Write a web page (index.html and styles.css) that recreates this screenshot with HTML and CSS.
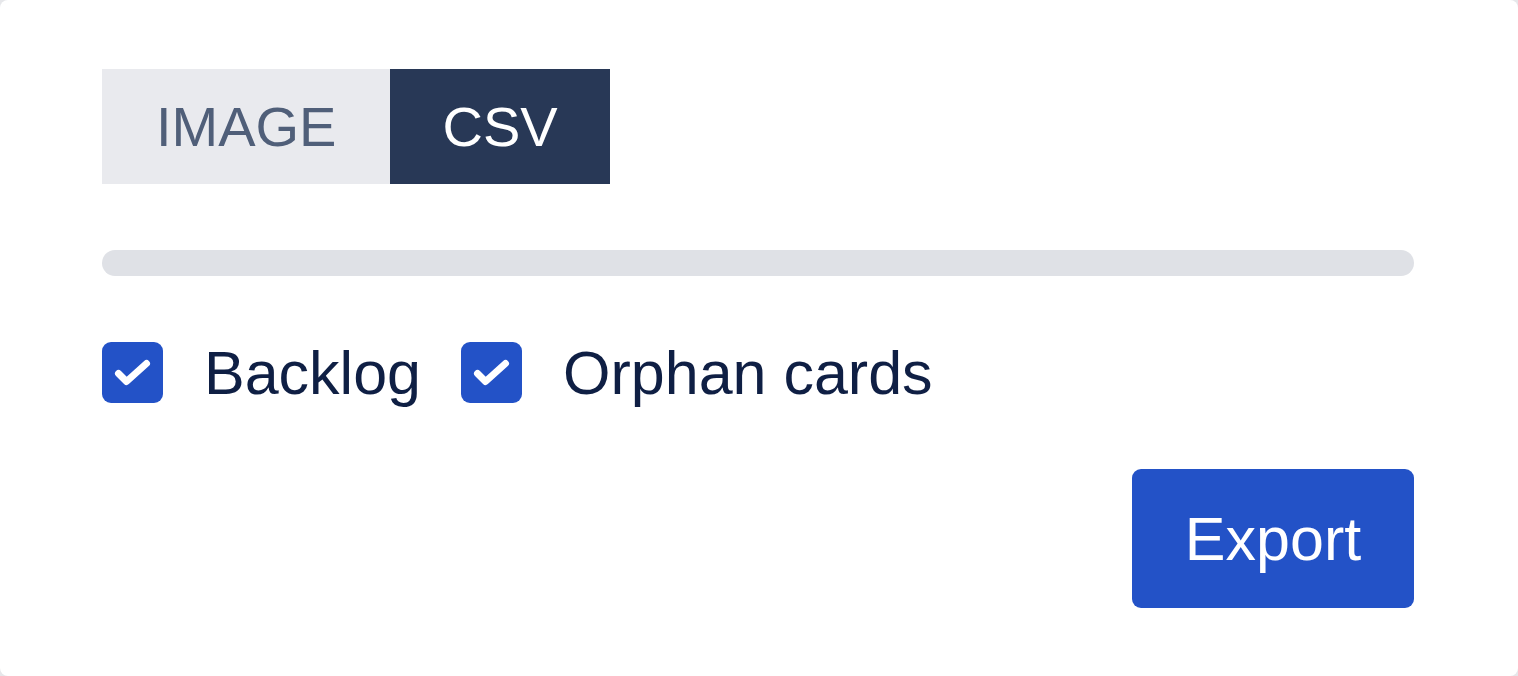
FILE: index.html
```html
<!DOCTYPE html>
<html lang="en">
<head>
    <meta charset="UTF-8">
    <meta name="viewport" content="width=device-width, initial-scale=1.0">
    <title>Export</title>
    <link rel="stylesheet" href="styles.css">
</head>
<body>
    <div class="card">
        <div class="tabs">
            <button class="tab">IMAGE</button>
            <button class="tab active">CSV</button>
        </div>

        <div class="progress"></div>

        <div class="options">
            <label class="option">
                <span class="box">
                    <svg viewBox="0 0 61 61" width="61" height="61"><path d="M16.5 31.5 L24.5 39.5 L44.5 21.5" fill="none" stroke="#fff" stroke-width="7" stroke-linecap="round" stroke-linejoin="round"/></svg>
                </span>
                Backlog
            </label>
            <label class="option">
                <span class="box">
                    <svg viewBox="0 0 61 61" width="61" height="61"><path d="M16.5 31.5 L24.5 39.5 L44.5 21.5" fill="none" stroke="#fff" stroke-width="7" stroke-linecap="round" stroke-linejoin="round"/></svg>
                </span>
                Orphan cards
            </label>
        </div>

        <div class="actions">
            <button class="export">Export</button>
        </div>
    </div>
</body>
</html>
```

FILE: styles.css
```css
body {
    margin: 0;
    padding: 0;
    font-family: "Liberation Sans", Arial, sans-serif;
    background-color: #e6e7ea;
}

.card {
    box-sizing: border-box;
    width: 1518px;
    height: 676px;
    background-color: #fff;
    border-radius: 8px;
    padding: 69px 104px 68px 102px;
    display: flex;
    flex-direction: column;
    gap: 66px;
}

.tabs {
    display: flex;
}

.tab {
    height: 115px;
    padding: 0 54px;
    border: none;
    font-family: inherit;
    font-size: 56px;
    background-color: #e9eaee;
    color: #505f79;
    cursor: pointer;
}

.tab.active {
    padding: 0 52px;
    background-color: #283856;
    color: #fff;
}

.progress {
    height: 26px;
    border-radius: 13px;
    background-color: #dfe1e6;
}

.options {
    display: flex;
    align-items: center;
    gap: 40px;
    height: 61px;
}

.option {
    display: flex;
    align-items: center;
    gap: 41px;
    font-size: 61px;
    color: #0f1f44;
    cursor: pointer;
}

.box {
    width: 61px;
    height: 61px;
    border-radius: 9px;
    background-color: #2352c7;
    display: flex;
}

.actions {
    display: flex;
    justify-content: flex-end;
}

.export {
    width: 282px;
    height: 139px;
    border: none;
    border-radius: 9px;
    background-color: #2352c7;
    color: #fff;
    font-family: inherit;
    font-size: 61px;
    cursor: pointer;
}
```
